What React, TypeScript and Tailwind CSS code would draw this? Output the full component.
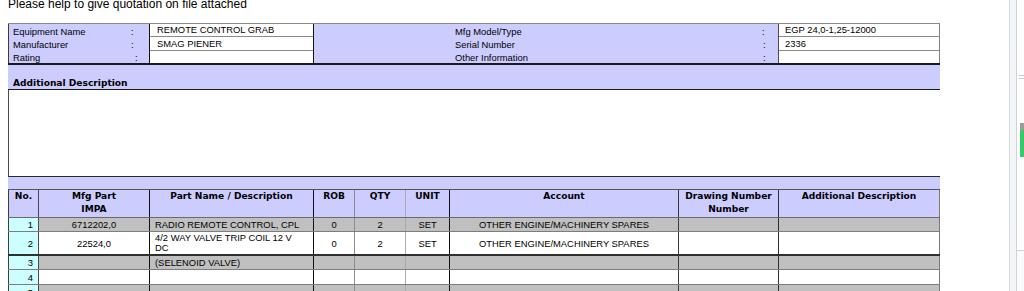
import React from "react";

const sans = "font-['Liberation_Sans',Arial,sans-serif]";
const bold = "font-['DejaVu_Sans',Verdana,sans-serif] font-bold";

// column widths of the items table, with the colour of each left border
const cols = [
  { w: "w-[30px]", line: "border-l-[#3c3c3c]" },
  { w: "w-[111px]", line: "border-l-[#4a4a4a]" },
  { w: "w-[164px]", line: "border-l-[#111111]" },
  { w: "w-[41px]", line: "border-l-[#111111]" },
  { w: "w-[51px]", line: "border-l-[#8c8c8c]" },
  { w: "w-[44px]", line: "border-l-[#a9a9a9]" },
  { w: "w-[229px]", line: "border-l-[#111111]" },
  { w: "w-[100px]", line: "border-l-[#3a3a3a]" },
  { w: "w-[162px]", line: "border-l-[#2e2e2e] border-r border-r-[#7a7a7a]" },
];

const headers: React.ReactNode[] = [
  "No.",
  <>Mfg Part<br />IMPA</>,
  "Part Name / Description",
  "ROB",
  "QTY",
  "UNIT",
  "Account",
  <>Drawing Number<br />Number</>,
  "Additional Description",
];

interface Item {
  no: string;
  impa: string;
  name: React.ReactNode;
  rob: string;
  qty: string;
  unit: string;
  account: string;
}

const items: Item[] = [
  { no: "1", impa: "6712202,0", name: "RADIO REMOTE CONTROL, CPL", rob: "0", qty: "2", unit: "SET", account: "OTHER ENGINE/MACHINERY SPARES" },
  { no: "2", impa: "22524,0", name: <>4/2 WAY VALVE TRIP COIL 12 V<br />DC</>, rob: "0", qty: "2", unit: "SET", account: "OTHER ENGINE/MACHINERY SPARES" },
  { no: "3", impa: "", name: "(SELENOID VALVE)", rob: "", qty: "", unit: "", account: "" },
  { no: "4", impa: "", name: "", rob: "", qty: "", unit: "", account: "" },
  { no: "5", impa: "", name: "", rob: "", qty: "", unit: "", account: "" },
];

const rowStyle = [
  "h-[14px] bg-[#c0c0c0] border-b border-b-[#7d7d7d]",
  "h-[24px] bg-white border-b-2 border-b-[#2f2f2f]",
  "h-[14px] bg-[#c0c0c0] border-b border-b-[#7d7d7d]",
  "h-[15px] bg-white border-b border-b-[#7d7d7d]",
  "h-[14px] bg-[#c0c0c0]",
];

function LabelRow({ label, w }: { label: string; w: string }) {
  return (
    <div className="flex h-[13px] items-center leading-[13px]">
      <span className={w}>{label}</span>
      <span>:</span>
    </div>
  );
}

function EquipmentHeader() {
  return (
    <div className={`flex h-[42px] border-t border-t-[#8a8a8a] border-b-2 border-b-[#1a1a1a] bg-[#ccccff] text-[9.4px] text-black ${sans}`}>
      <div className="w-[141px] border-l border-l-[#3a3a3a] pl-[4px] pt-[1px]">
        <LabelRow label="Equipment Name" w="w-[118px]" />
        <LabelRow label="Manufacturer" w="w-[118px]" />
        <LabelRow label="Rating" w="w-[122px]" />
      </div>
      <div className="w-[165px] border-x border-x-[#111111] bg-white">
        <div className="h-[13px] border-b border-b-[#8a8a8a] pl-[7px] leading-[12px]">REMOTE CONTROL GRAB</div>
        <div className="h-[14px] border-b border-b-[#8a8a8a] pl-[7px] leading-[13px]">SMAG PIENER</div>
        <div className="h-[12px]" />
      </div>
      <div className="w-[464px] pl-[141px] pt-[1px]">
        <LabelRow label="Mfg Model/Type" w="w-[307px]" />
        <LabelRow label="Serial Number" w="w-[308px]" />
        <LabelRow label="Other Information" w="w-[308px]" />
      </div>
      <div className="w-[162px] border-l border-l-[#4a4a4a] border-r border-r-[#808080] bg-white">
        <div className="h-[13px] border-b border-b-[#8a8a8a] pl-[6px] leading-[12px]">EGP 24,0-1,25-12000</div>
        <div className="h-[14px] border-b border-b-[#8a8a8a] pl-[6px] leading-[13px]">2336</div>
        <div className="h-[12px]" />
      </div>
    </div>
  );
}

function ItemsTable() {
  return (
    <div className="w-[932px]">
      <div className={`flex h-[29px] border-y border-t-[#555555] border-b-[#6a6a6a] bg-[#ccccff] text-[9.1px] leading-[12.5px] text-black ${bold}`}>
        {headers.map((h, i) => (
          <div key={i} className={`${cols[i].w} border-l ${cols[i].line} text-center`}>
            {h}
          </div>
        ))}
      </div>
      {items.map((it, r) => {
        const cells = [it.no, it.impa, it.name, it.rob, it.qty, it.unit, it.account, "", ""];
        return (
          <div key={it.no} className={`flex ${rowStyle[r]} text-[9.4px] text-black ${sans}`}>
            {cells.map((c, i) => {
              let align = "justify-center text-center";
              let extra = "";
              if (i === 0) {
                align = "justify-end";
                extra = "bg-[#ccffff] pr-[5px]";
              } else if (i === 2) {
                align = "justify-start";
                extra = "pl-[5px]";
              }
              return (
                <div
                  key={i}
                  className={`flex items-center ${cols[i].w} border-l ${cols[i].line} ${align} ${extra} ${i === 2 && r === 1 ? "leading-[10.5px]" : "leading-[13px]"}`}
                >
                  {c}
                </div>
              );
            })}
          </div>
        );
      })}
    </div>
  );
}

function SidePanel() {
  return (
    <div className="flex h-full w-[15px] border-l border-l-[#d3dae2] bg-[#f3f5f7]">
      <div className="w-[6px]" />
      <div className="flex w-[8px] flex-col">
        <div className="relative h-[251px] border-l border-l-[#cdd3da] border-b border-b-[#cdd3da] bg-white">
          <div className="absolute left-[2px] top-[75px] h-[1px] w-[5px] bg-[#c4c9cf]" />
          <div className="absolute left-[2px] top-[78px] h-[1px] w-[5px] bg-[#c4c9cf]" />
          <div className="absolute left-[3px] top-[123px] h-[7px] w-[4px] bg-[#9b9b9b]" />
          <div className="absolute left-[3px] top-[130px] h-[27px] w-[4px] bg-[#33cc66]" />
        </div>
        <div className="flex-1 border-l border-l-[#cdd3da] bg-[#fafbfc]" />
      </div>
    </div>
  );
}

export default function App() {
  return (
    <div className="flex h-[291px] w-[1024px] overflow-hidden bg-white">
      <div className="w-[1009px] overflow-hidden">
        <p className={`ml-[8px] mt-[-2px] text-[12px] leading-[12px] text-black ${sans}`}>
          Please help to give quotation on file attached
        </p>
        <div className="ml-[8px] mt-[13px] w-[932px]">
          <EquipmentHeader />
          <div className={`flex h-[25px] items-end border-b border-b-[#1a1a1a] bg-[#ccccff] pl-[5px] text-[9.1px] leading-[11px] text-black ${bold}`}>
            <span>Additional Description</span>
          </div>
          <div className="h-[87px] border-l border-l-[#4a4a4a] border-b border-b-[#2a2a2a] bg-white" />
          <div className="h-[12px] bg-[#ccccff]" />
          <ItemsTable />
        </div>
      </div>
      <SidePanel />
    </div>
  );
}
